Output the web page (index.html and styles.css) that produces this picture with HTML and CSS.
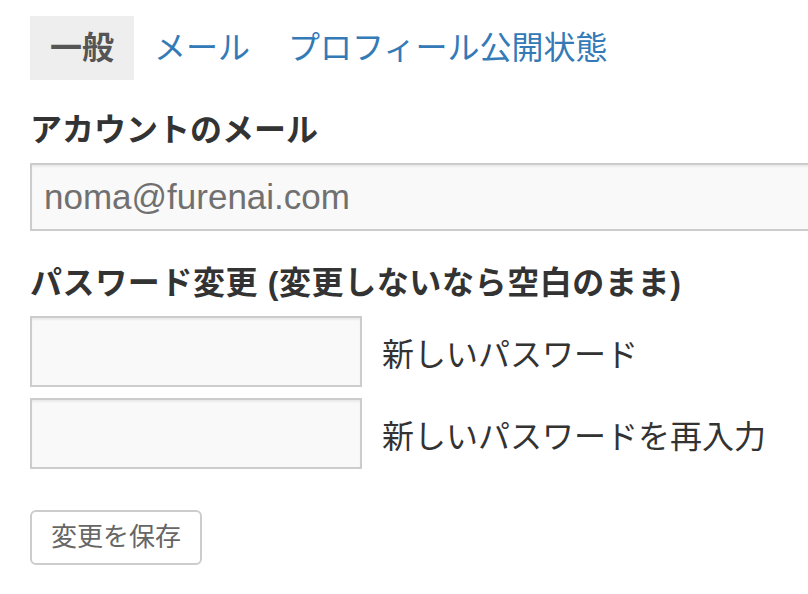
FILE: index.html
```html
<!DOCTYPE html>
<html lang="ja">
<head>
    <meta charset="UTF-8">
    <meta name="viewport" content="width=device-width, initial-scale=1.0">
    <title>設定</title>
    <link rel="stylesheet" href="styles.css">
</head>
<body>
    <ul class="tabs">
        <li class="tab active"><span>一般</span></li>
        <li class="tab"><a href="#">メール</a></li>
        <li class="tab"><a href="#">プロフィール公開状態</a></li>
    </ul>
    <form class="settings">
        <h3>アカウントのメール</h3>
        <input class="field email" type="text" value="noma@furenai.com" readonly>

        <h3 class="second">パスワード変更 (変更しないなら空白のまま)</h3>
        <div class="pw-row">
            <input class="field pw" type="password" id="pw1">
            <label for="pw1">新しいパスワード</label>
        </div>
        <div class="pw-row">
            <input class="field pw" type="password" id="pw2">
            <label for="pw2">新しいパスワードを再入力</label>
        </div>

        <button type="button" class="save">変更を保存</button>
    </form>
</body>
</html>
```

FILE: styles.css
```css
html {
    overflow-x: hidden;
}
body {
    font-family: "Liberation Sans", "Noto Sans CJK JP", sans-serif;
    color: #333;
    background: #fff;
    margin: 0;
    padding: 16px 0 0 30px;
}
.tabs {
    display: flex;
    margin: 0;
    padding: 0;
    list-style: none;
}
.tab a, .tab span {
    display: block;
    padding: 0 20px;
    font-size: 32px;
    line-height: 64px;
    color: #337ab7;
    text-decoration: none;
}
.tab:last-child a {
    padding-left: 18px;
}
.tab.active span {
    background: #eee;
    color: #555;
    font-weight: bold;
}
.settings {
    width: 800px;
}
h3 {
    margin: 30px 0 13px;
    font-size: 32px;
    line-height: 40px;
    font-weight: bold;
    color: #333;
}
h3.second {
    margin-top: 32px;
    letter-spacing: 0.6px;
}
.field {
    display: block;
    box-sizing: border-box;
    border: 2px solid #ccc;
    background: #f9f9f9;
    box-shadow: inset 0 2px 2px rgba(0, 0, 0, 0.06);
    margin: 0;
    padding: 0 12px;
    font-family: inherit;
}
.email {
    width: 100%;
    height: 68px;
    font-size: 35px;
    color: #707070;
}
.pw-row {
    display: flex;
    align-items: center;
    gap: 20px;
    margin-bottom: 11px;
}
.pw {
    width: 332px;
    height: 71px;
}
.pw-row label {
    font-size: 32px;
    color: #333;
}
.save {
    margin-top: 30px;
    width: 172px;
    height: 55px;
    border: 2px solid #ccc;
    border-radius: 6px;
    background: #fff;
    color: #666;
    font-size: 26px;
    line-height: 50px;
    font-family: inherit;
    padding: 0 0 4px;
}
```
